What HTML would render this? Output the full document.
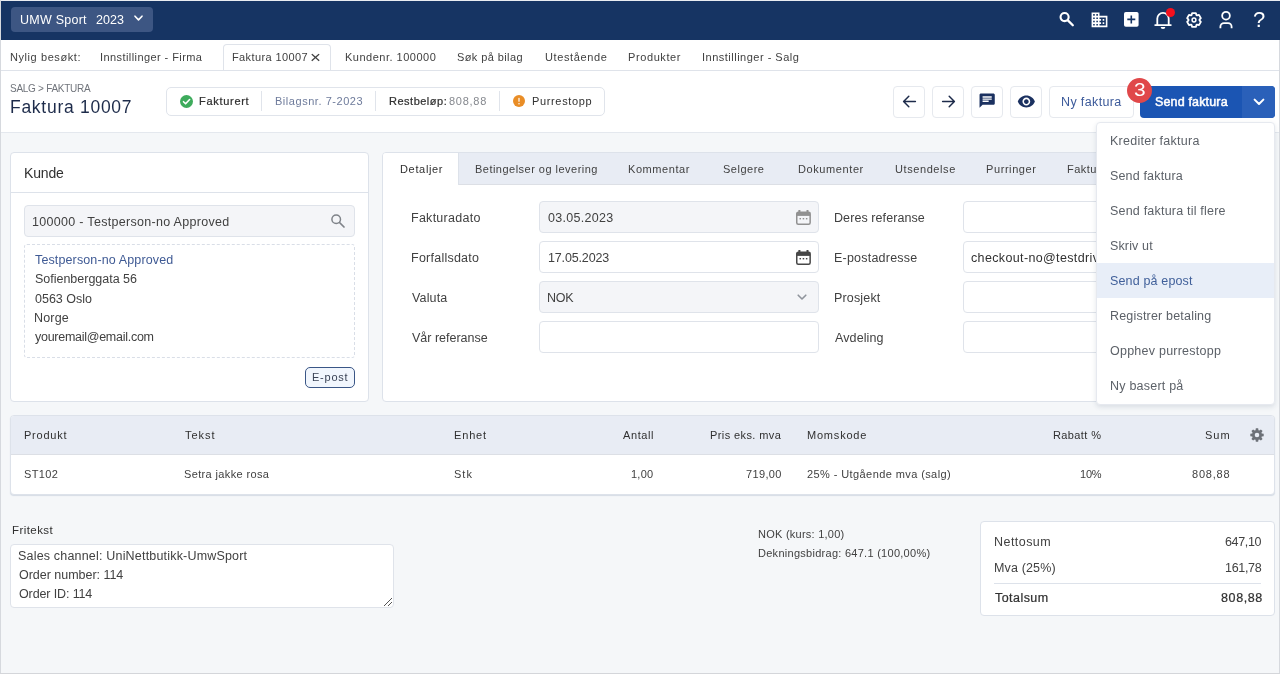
<!DOCTYPE html>
<html lang="no">
<head>
<meta charset="utf-8">
<title>Faktura 10007</title>
<style>
*{box-sizing:border-box;margin:0;padding:0}
html,body{width:1280px;height:674px;overflow:hidden}
body{font-family:"Liberation Sans","DejaVu Sans",sans-serif;font-size:13px;color:#3a3a3a;background:#f5f7f9;position:relative}
.abs{position:absolute}
svg{position:absolute;overflow:visible}
.t{position:absolute;white-space:nowrap;line-height:1;will-change:transform}
#nav{left:0;top:0;width:1280px;height:40px;background:#163463}
#company{left:11px;top:7px;width:142px;height:25px;border-radius:4px;background:#3d5683}
#tabs{left:0;top:40px;width:1280px;height:31px;background:#fff;border-bottom:1px solid #dfe3ea}
#acttab{left:223px;top:44px;width:108px;height:26px;background:#fff;border:1px solid #dfe3ea;border-bottom:none;border-radius:4px 4px 0 0}
#toolbar{left:0;top:71px;width:1280px;height:62px;background:#fff;border-bottom:1px solid #e4e8ee}
#pill{left:166px;top:87px;width:439px;height:29px;border:1px solid #e0e4eb;border-radius:5px;background:#fff}
.sep{position:absolute;top:91px;width:1px;height:20px;background:#e0e4eb}
.ibtn{position:absolute;top:86px;height:32px;width:32px;border:1px solid #e6e9ee;border-radius:4px;background:#fff}
.card{position:absolute;background:#fff;border:1px solid #dde2ea;border-radius:4px}
.inp{position:absolute;height:32px;border:1px solid #dfe3ea;border-radius:4px;background:#fff}
.inp.dis{background:#f4f5f8}
#menu{left:1096px;top:122px;width:179px;height:283px;background:#fff;border:1px solid #e6e9ef;border-radius:4px;box-shadow:0 2px 5px rgba(40,60,90,.13);z-index:30}
</style>
</head>
<body>
<div class="abs" id="nav"></div>
<div class="abs" id="company"></div>
<svg style="left:134px;top:15px" width="9" height="7" viewBox="0 0 9 7"><path d="M1 1.2 L4.5 4.9 L8 1.2" fill="none" stroke="#fff" stroke-width="1.6" stroke-linecap="round" stroke-linejoin="round"/></svg>

<!-- navbar icons -->
<svg style="left:1058px;top:10px" width="18" height="18" viewBox="0 0 18 18"><circle cx="6.6" cy="7.1" r="4.05" fill="none" stroke="#fff" stroke-width="2.1"/><path d="M9.9 10.4 L14.8 15.3" stroke="#fff" stroke-width="2.3" stroke-linecap="round"/></svg>
<svg style="left:1089.6px;top:9.7px" width="19" height="19.7" viewBox="0 0 24 24" preserveAspectRatio="none"><path fill="#fff" d="M12 7V3H2v18h20V7H12zM6 19H4v-2h2v2zm0-4H4v-2h2v2zm0-4H4V9h2v2zm0-4H4V5h2v2zm4 12H8v-2h2v2zm0-4H8v-2h2v2zm0-4H8V9h2v2zm0-4H8V5h2v2zm10 12h-8v-2h2v-2h-2v-2h2v-2h-2V9h8v10zm-2-8h-2v2h2v-2zm0 4h-2v2h2v-2z"/></svg>
<svg style="left:1123.6px;top:12.2px" width="14.6" height="14.8" viewBox="0 0 14.6 14.8"><rect x="0" y="0" width="14.6" height="14.8" rx="1.8" fill="#fff"/><path d="M3.3 7.4 H11.3 M7.3 3.4 V11.4" stroke="#163463" stroke-width="1.6"/></svg>
<svg style="left:1152.6px;top:9px" width="20" height="21" viewBox="0 0 20 21"><path d="M4.3 16 V9.6 A5.7 5.7 0 0 1 15.7 9.6 V16" fill="none" stroke="#fff" stroke-width="1.8"/><path d="M2.2 16.1 H17.8" stroke="#fff" stroke-width="1.9" stroke-linecap="round"/><path d="M7.7 18 H12.3 A2.3 2.1 0 0 1 7.7 18Z" fill="#fff"/></svg>
<div class="abs" style="left:1165.6px;top:7.6px;width:9px;height:9px;border-radius:50%;background:#f5101d"></div>
<svg style="left:1184.45px;top:9.6px" width="20" height="20" viewBox="0 0 20 20"><path d="M12.50 5.10 L11.84 3.14 L8.16 3.14 L7.50 5.10 L7.00 5.39 L4.98 4.98 L3.14 8.16 L4.51 9.71 L4.51 10.29 L3.14 11.84 L4.98 15.02 L7.00 14.61 L7.50 14.90 L8.16 16.86 L11.84 16.86 L12.50 14.90 L13.00 14.61 L15.02 15.02 L16.86 11.84 L15.49 10.29 L15.49 9.71 L16.86 8.16 L15.02 4.98 L13.00 5.39Z" fill="none" stroke="#fff" stroke-width="1.8" stroke-linejoin="round"/><circle cx="10" cy="10" r="1.9" fill="none" stroke="#fff" stroke-width="1.5"/></svg>
<svg style="left:1216.4px;top:9px" width="20" height="21" viewBox="0 0 20 21"><circle cx="10" cy="6.7" r="3.85" fill="none" stroke="#fff" stroke-width="1.8"/><path d="M4.4 19.2 V17.8 A3.6 3.6 0 0 1 8 14.2 H12 A3.6 3.6 0 0 1 15.6 17.800 V19.2" fill="none" stroke="#fff" stroke-width="1.8"/></svg>
<span class="t" style="left:1252.6px;top:8.9px;font-size:22px;color:#fff">?</span>

<div class="abs" id="tabs"></div>
<div class="abs" id="acttab"></div>
<div class="abs" id="toolbar"></div>
<div class="abs" id="pill"></div>
<div class="sep" style="left:261px"></div>
<div class="sep" style="left:375px"></div>
<div class="sep" style="left:499px"></div>
<svg style="left:180px;top:95px" width="13" height="13" viewBox="0 0 13 13"><circle cx="6.500" cy="6.5" r="6.5" fill="#3eab5c"/><path d="M3.500 6.700 L5.600 8.800 L9.600 4.500" fill="none" stroke="#fff" stroke-width="1.6" stroke-linecap="round" stroke-linejoin="round"/></svg>
<svg style="left:513px;top:95.400px" width="12" height="12" viewBox="0 0 12 12"><circle cx="6" cy="6" r="6" fill="#e98d26"/><rect x="5.350" y="2.800" width="1.3" height="4" rx=".6" fill="#fff" fill-opacity=".92"/><circle cx="6" cy="8.800" r=".8" fill="#fff" fill-opacity=".92"/></svg>

<div class="ibtn" style="left:893px"></div>
<div class="ibtn" style="left:932px"></div>
<div class="ibtn" style="left:971px"></div>
<div class="ibtn" style="left:1010px"></div>
<svg style="left:902px;top:94px" width="15" height="15" viewBox="0 0 15 15"><path d="M13.400 7.500 H1.800 M6.800 2.300 L1.600 7.500 L6.800 12.700" fill="none" stroke="#1d2b4a" stroke-width="1.5" stroke-linecap="round" stroke-linejoin="round"/></svg>
<svg style="left:940.500px;top:94px" width="15" height="15" viewBox="0 0 15 15"><path d="M1.600 7.500 H13.200 M8.200 2.300 L13.400 7.500 L8.200 12.700" fill="none" stroke="#1d2b4a" stroke-width="1.5" stroke-linecap="round" stroke-linejoin="round"/></svg>
<svg style="left:978.400px;top:92.400px" width="18.300" height="17.100" viewBox="0 0 24 24" preserveAspectRatio="none"><path fill="#1b3160" d="M20 2H4c-1.100 0-1.990.9-1.990 2L2 22l4-4h14c1.100 0 2-.9 2-2V4c0-1.100-.9-2-2-2zM6 9h12v2H6V9zm8 5H6v-2h8v2zm4-6H6V6h12v2z"/></svg>
<svg style="left:1016.600px;top:91.700px" width="18.700" height="19" viewBox="0 0 24 24" preserveAspectRatio="none"><path fill="#1b3160" d="M12 4.500C7 4.500 2.730 7.610 1 12c1.730 4.390 6 7.500 11 7.500s9.270-3.110 11-7.500c-1.730-4.390-6-7.500-11-7.500zM12 17c-2.760 0-5-2.240-5-5s2.240-5 5-5 5 2.240 5 5-2.240 5-5 5zm0-8c-1.660 0-3 1.340-3 3s1.340 3 3 3 3-1.340 3-3-1.340-3-3-3z"/></svg>
<div class="ibtn" style="left:1049px;width:85px"></div>
<div class="abs" style="left:1140px;top:86px;width:135px;height:32px;border-radius:4px;background:#1b55b3"></div>
<div class="abs" style="left:1242px;top:86px;width:33px;height:32px;border-radius:0 4px 4px 0;background:#2a60b9"></div>
<svg style="left:1253px;top:98px" width="12" height="8" viewBox="0 0 12 8"><path d="M1.600 1.600 L6 6 L10.400 1.600" fill="none" stroke="#fff" stroke-width="2" stroke-linecap="round" stroke-linejoin="round"/></svg>
<div class="abs" style="left:1127px;top:77.5px;width:25px;height:25px;border-radius:50%;background:#e0484a"></div>

<!-- Kunde card -->
<div class="card" style="left:10px;top:152px;width:359px;height:250px"></div>
<div class="abs" style="left:11px;top:192px;width:357px;height:1px;background:#dde2ea"></div>
<div class="inp dis" style="left:24px;top:205px;width:331px"></div>
<svg style="left:330px;top:213px" width="16" height="16" viewBox="0 0 16 16"><circle cx="6.200" cy="6.200" r="4.300" fill="none" stroke="#7f8389" stroke-width="1.500"/><path d="M9.500 9.500 L14 14" stroke="#7f8389" stroke-width="1.700" stroke-linecap="round"/></svg>
<div class="abs" style="left:24px;top:244px;width:331px;height:114px;border:1px dashed #d9dee7;border-radius:3px"></div>
<div class="abs" style="left:305px;top:367px;width:50px;height:21px;border:1px solid #3a5686;border-radius:5px;background:#f1f6fd"></div>

<!-- Details card -->
<div class="card" style="left:382px;top:152px;width:893px;height:250px"></div>
<div class="abs" style="left:383px;top:153px;width:891px;height:32px;background:#e8ecf4;border-bottom:1px solid #dcdfe5;border-radius:3px 3px 0 0"></div>
<div class="abs" style="left:383px;top:153px;width:76px;height:32px;background:#fff;border-right:1px solid #dde2ea;border-radius:3px 0 0 0"></div>
<div class="inp dis" style="left:539px;top:201px;width:280px"></div>
<div class="inp" style="left:539px;top:241px;width:280px"></div>
<div class="inp dis" style="left:539px;top:281px;width:280px"></div>
<div class="inp" style="left:539px;top:321px;width:280px"></div>
<div class="inp" style="left:963px;top:201px;width:280px"></div>
<div class="inp" style="left:963px;top:241px;width:280px"></div>
<div class="inp" style="left:963px;top:281px;width:280px"></div>
<div class="inp" style="left:963px;top:321px;width:280px"></div>
<svg style="left:796px;top:210px" width="15" height="15" viewBox="0 0 15 15"><rect x=".75" y="2.300" width="13.400" height="11.900" rx="1.500" fill="none" stroke="#919191" stroke-width="1.500"/><rect x=".75" y="2.300" width="13.400" height="3.600" fill="#919191"/><rect x="2.400" y="0" width="2" height="3" fill="#919191"/><rect x="10.500" y="0" width="2" height="3" fill="#919191"/><rect x="3.500" y="8" width="1.500" height="1.400" fill="#919191"/><rect x="6.700" y="8" width="1.500" height="1.400" fill="#919191"/><rect x="9.900" y="8" width="1.500" height="1.400" fill="#919191"/></svg>
<svg style="left:796px;top:250px" width="15" height="15" viewBox="0 0 15 15"><rect x=".75" y="2.300" width="13.400" height="11.900" rx="1.500" fill="none" stroke="#474747" stroke-width="1.500"/><rect x=".75" y="2.300" width="13.400" height="3.600" fill="#474747"/><rect x="2.400" y="0" width="2" height="3" fill="#474747"/><rect x="10.500" y="0" width="2" height="3" fill="#474747"/><rect x="3.500" y="8" width="1.500" height="1.400" fill="#474747"/><rect x="6.700" y="8" width="1.500" height="1.400" fill="#474747"/><rect x="9.900" y="8" width="1.500" height="1.400" fill="#474747"/></svg>
<svg style="left:797px;top:293.500px" width="10" height="7" viewBox="0 0 10 7"><path d="M1.200 1.200 L5 5 L8.800 1.200" fill="none" stroke="#8f949c" stroke-width="1.600" stroke-linecap="round" stroke-linejoin="round"/></svg>

<!-- Table -->
<div class="card" style="left:10px;top:415px;width:1265px;height:80px;box-shadow:0 1px 1px rgba(120,140,170,.25)"></div>
<div class="abs" style="left:11px;top:416px;width:1263px;height:39px;background:#e8ecf4;border-bottom:1px solid #dcdfe5;border-radius:3px 3px 0 0"></div>
<svg style="left:1249px;top:427.200px" width="16" height="16" viewBox="0 0 16 16"><path fill="#6d7178" fill-rule="evenodd" d="M9.46 3.22 L9.18 1.30 L6.82 1.30 L6.54 3.22 L5.65 3.59 L4.10 2.43 L2.43 4.10 L3.59 5.65 L3.22 6.54 L1.30 6.82 L1.30 9.18 L3.22 9.46 L3.59 10.35 L2.43 11.90 L4.10 13.57 L5.65 12.41 L6.54 12.78 L6.82 14.70 L9.18 14.70 L9.46 12.78 L10.35 12.41 L11.90 13.57 L13.57 11.90 L12.41 10.35 L12.78 9.46 L14.70 9.18 L14.70 6.82 L12.78 6.54 L12.41 5.65 L13.57 4.10 L11.90 2.43 L10.35 3.59Z M10.300 8 A2.300 2.300 0 1 0 5.700 8 A2.300 2.300 0 1 0 10.300 8Z"/></svg>

<!-- Fritekst -->
<div class="abs" style="left:10px;top:544px;width:384px;height:64px;border:1px solid #dfe3ea;border-radius:4px;background:#fff"></div>
<svg style="left:383px;top:597px" width="10" height="10" viewBox="0 0 10 10"><path d="M1 9 L9 1 M5 9 L9 5" stroke="#555" stroke-width="1" fill="none"/></svg>

<!-- Summary -->
<div class="card" style="left:980px;top:521px;width:295px;height:95px"></div>
<div class="abs" style="left:994px;top:583px;width:267px;height:1px;background:#dde2ea"></div>

<!-- Dropdown menu -->
<div class="abs" id="menu"><div class="abs" style="left:0;top:140px;width:177px;height:35px;background:#e8eef8"></div></div>

<span class="t" style="left:20.00px;top:14px;font-size:12.5px;color:#fff;letter-spacing:0.245px;">UMW Sport</span>
<span class="t" style="left:95.86px;top:14px;font-size:12.5px;color:#fff;letter-spacing:0.014px;">2023</span>
<span class="t" style="left:10.09px;top:52px;font-size:11px;color:#414141;letter-spacing:0.572px;">Nylig besøkt:</span>
<span class="t" style="left:99.98px;top:52px;font-size:11px;color:#414141;letter-spacing:0.420px;">Innstillinger - Firma</span>
<span class="t" style="left:232.09px;top:52px;font-size:11px;color:#414141;letter-spacing:0.385px;">Faktura 10007</span>
<span class="t" style="left:310.49px;top:49px;font-size:17px;color:#414141;transform:scaleX(1.099);transform-origin:0 50%;">×</span>
<span class="t" style="left:344.59px;top:52px;font-size:11px;color:#414141;letter-spacing:0.502px;">Kundenr. 100000</span>
<span class="t" style="left:457.17px;top:52px;font-size:11px;color:#414141;letter-spacing:0.405px;">Søk på bilag</span>
<span class="t" style="left:544.66px;top:52px;font-size:11px;color:#414141;letter-spacing:0.615px;">Utestående</span>
<span class="t" style="left:628.34px;top:52px;font-size:11px;color:#414141;letter-spacing:0.599px;">Produkter</span>
<span class="t" style="left:702.48px;top:52px;font-size:11px;color:#414141;letter-spacing:0.495px;">Innstillinger - Salg</span>
<span class="t" style="left:10.44px;top:84px;font-size:10px;color:#70747b;letter-spacing:-0.271px;">SALG &gt; FAKTURA</span>
<span class="t" style="left:10.35px;top:99px;font-size:17.5px;color:#1d2b4a;letter-spacing:0.726px;">Faktura 10007</span>
<span class="t" style="left:199.03px;top:96px;font-size:11px;color:#303030;letter-spacing:0.707px;-webkit-text-stroke:0.22px #303030;">Fakturert</span>
<span class="t" style="left:274.59px;top:96px;font-size:11px;color:#6e7b9b;letter-spacing:0.538px;">Bilagsnr. 7-2023</span>
<span class="t" style="left:388.53px;top:96px;font-size:11px;color:#303030;letter-spacing:0.502px;-webkit-text-stroke:0.22px #303030;">Restbeløp:</span>
<span class="t" style="left:449.22px;top:96px;font-size:11px;color:#85888e;letter-spacing:0.735px;">808,88</span>
<span class="t" style="left:532.09px;top:96px;font-size:11px;color:#303030;letter-spacing:0.646px;">Purrestopp</span>
<span class="t" style="left:1061.46px;top:96px;font-size:12.5px;color:#3c5a9a;letter-spacing:0.372px;">Ny faktura</span>
<span class="t" style="left:1155.33px;top:96px;font-size:12.5px;color:#fff;letter-spacing:0.156px;-webkit-text-stroke:0.5px #fff;">Send faktura</span>
<span class="t" style="left:1133.67px;top:81px;font-size:18.5px;color:#fff;transform:scaleX(1.130);transform-origin:0 50%;">3</span>
<span class="t" style="left:23.82px;top:166px;font-size:14px;color:#303030;letter-spacing:-0.171px;">Kunde</span>
<span class="t" style="left:32.00px;top:216px;font-size:12.5px;color:#414141;letter-spacing:0.305px;">100000 - Testperson-no Approved</span>
<span class="t" style="left:35.20px;top:254px;font-size:12.5px;color:#3f5a94;letter-spacing:0.128px;">Testperson-no Approved</span>
<span class="t" style="left:34.63px;top:273px;font-size:12.5px;color:#414141;letter-spacing:-0.012px;">Sofienberggata 56</span>
<span class="t" style="left:34.98px;top:293px;font-size:12.5px;color:#414141;letter-spacing:-0.014px;">0563 Oslo</span>
<span class="t" style="left:34.46px;top:312px;font-size:12.5px;color:#414141;letter-spacing:0.174px;">Norge</span>
<span class="t" style="left:35.26px;top:331px;font-size:12.5px;color:#414141;letter-spacing:-0.270px;">youremail@email.com</span>
<span class="t" style="left:312.39px;top:372px;font-size:11px;color:#3a4356;letter-spacing:0.755px;">E-post</span>
<span class="t" style="left:399.59px;top:164px;font-size:11px;color:#303030;letter-spacing:0.660px;">Detaljer</span>
<span class="t" style="left:475.09px;top:164px;font-size:11px;color:#414141;letter-spacing:0.478px;">Betingelser og levering</span>
<span class="t" style="left:628.34px;top:164px;font-size:11px;color:#414141;letter-spacing:0.578px;">Kommentar</span>
<span class="t" style="left:723.17px;top:164px;font-size:11px;color:#414141;letter-spacing:0.500px;">Selgere</span>
<span class="t" style="left:798.09px;top:164px;font-size:11px;color:#414141;letter-spacing:0.597px;">Dokumenter</span>
<span class="t" style="left:894.66px;top:164px;font-size:11px;color:#414141;letter-spacing:0.586px;">Utsendelse</span>
<span class="t" style="left:986.09px;top:164px;font-size:11px;color:#414141;letter-spacing:0.586px;">Purringer</span>
<span class="t" style="left:1067.39px;top:164px;font-size:11px;color:#414141;letter-spacing:0.491px;">Faktu</span>
<span class="t" style="left:411.21px;top:212px;font-size:12.5px;color:#414141;letter-spacing:0.265px;">Fakturadato</span>
<span class="t" style="left:411.21px;top:252px;font-size:12.5px;color:#414141;letter-spacing:0.242px;">Forfallsdato</span>
<span class="t" style="left:411.98px;top:292px;font-size:12.5px;color:#414141;letter-spacing:0.148px;">Valuta</span>
<span class="t" style="left:411.98px;top:332px;font-size:12.5px;color:#414141;letter-spacing:-0.006px;">Vår referanse</span>
<span class="t" style="left:547.98px;top:212px;font-size:12.5px;color:#414141;letter-spacing:0.299px;">03.05.2023</span>
<span class="t" style="left:548.00px;top:252px;font-size:12.5px;color:#414141;letter-spacing:-0.148px;">17.05.2023</span>
<span class="t" style="left:547.46px;top:292px;font-size:12.5px;color:#414141;letter-spacing:-0.243px;">NOK</span>
<span class="t" style="left:834.26px;top:212px;font-size:12.5px;color:#414141;letter-spacing:0.082px;">Deres referanse</span>
<span class="t" style="left:834.26px;top:252px;font-size:12.5px;color:#414141;letter-spacing:0.220px;">E-postadresse</span>
<span class="t" style="left:834.26px;top:292px;font-size:12.5px;color:#414141;letter-spacing:0.164px;">Prosjekt</span>
<span class="t" style="left:835.05px;top:332px;font-size:12.5px;color:#414141;letter-spacing:0.115px;">Avdeling</span>
<span class="t" style="left:970.93px;top:252px;font-size:12.5px;color:#303030;letter-spacing:0.359px;">checkout-no@testdriv</span>
<span class="t" style="left:23.84px;top:430px;font-size:11px;color:#303030;letter-spacing:0.771px;">Produkt</span>
<span class="t" style="left:184.55px;top:430px;font-size:11px;color:#303030;letter-spacing:0.962px;">Tekst</span>
<span class="t" style="left:453.59px;top:430px;font-size:11px;color:#303030;letter-spacing:0.844px;">Enhet</span>
<span class="t" style="left:623.27px;top:430px;font-size:11px;color:#303030;letter-spacing:0.610px;">Antall</span>
<span class="t" style="left:710.34px;top:430px;font-size:11px;color:#303030;letter-spacing:0.406px;">Pris eks. mva</span>
<span class="t" style="left:806.59px;top:430px;font-size:11px;color:#303030;letter-spacing:0.797px;">Momskode</span>
<span class="t" style="left:1053.34px;top:430px;font-size:11px;color:#303030;letter-spacing:0.384px;">Rabatt %</span>
<span class="t" style="left:1204.67px;top:430px;font-size:11px;color:#303030;letter-spacing:1.000px;">Sum</span>
<span class="t" style="left:23.92px;top:469px;font-size:11px;color:#414141;letter-spacing:0.362px;">ST102</span>
<span class="t" style="left:184.17px;top:469px;font-size:11px;color:#414141;letter-spacing:0.358px;">Setra jakke rosa</span>
<span class="t" style="left:453.67px;top:469px;font-size:11px;color:#414141;letter-spacing:1.000px;">Stk</span>
<span class="t" style="left:631.37px;top:469px;font-size:11px;color:#414141;letter-spacing:0.255px;">1,00</span>
<span class="t" style="left:746.08px;top:469px;font-size:11px;color:#414141;letter-spacing:0.357px;">719,00</span>
<span class="t" style="left:806.93px;top:469px;font-size:11px;color:#414141;letter-spacing:0.408px;">25% - Utgående mva (salg)</span>
<span class="t" style="left:1079.62px;top:469px;font-size:11px;color:#414141;letter-spacing:-0.207px;">10%</span>
<span class="t" style="left:1191.87px;top:469px;font-size:11px;color:#414141;letter-spacing:0.785px;">808,88</span>
<span class="t" style="left:12.00px;top:525px;font-size:11.5px;color:#303030;letter-spacing:0.436px;">Fritekst</span>
<span class="t" style="left:18.33px;top:550px;font-size:12.5px;color:#414141;letter-spacing:0.188px;">Sales channel: UniNettbutikk-UmwSport</span>
<span class="t" style="left:18.56px;top:569px;font-size:12.5px;color:#414141;letter-spacing:-0.024px;">Order number: 114</span>
<span class="t" style="left:18.56px;top:588px;font-size:12.5px;color:#414141;letter-spacing:-0.124px;">Order ID: 114</span>
<span class="t" style="left:757.59px;top:529px;font-size:11px;color:#414141;letter-spacing:0.249px;">NOK (kurs: 1,00)</span>
<span class="t" style="left:757.59px;top:548px;font-size:11px;color:#414141;letter-spacing:0.274px;">Dekningsbidrag: 647.1 (100,00%)</span>
<span class="t" style="left:993.96px;top:536px;font-size:12.5px;color:#414141;letter-spacing:0.458px;">Nettosum</span>
<span class="t" style="left:1225.32px;top:536px;font-size:12.5px;color:#414141;letter-spacing:-0.348px;">647,10</span>
<span class="t" style="left:993.96px;top:562px;font-size:12.5px;color:#414141;letter-spacing:0.151px;">Mva (25%)</span>
<span class="t" style="left:1225.25px;top:562px;font-size:12.5px;color:#414141;letter-spacing:-0.318px;">161,78</span>
<span class="t" style="left:994.81px;top:592px;font-size:12.5px;color:#303030;letter-spacing:0.452px;-webkit-text-stroke:0.22px #303030;">Totalsum</span>
<span class="t" style="left:1220.52px;top:592px;font-size:12.5px;color:#303030;letter-spacing:0.611px;-webkit-text-stroke:0.22px #303030;">808,88</span>
<span class="t" style="left:1109.86px;top:135px;font-size:12.5px;color:#5c6168;letter-spacing:0.264px;z-index:31;">Krediter faktura</span>
<span class="t" style="left:1110.03px;top:170px;font-size:12.5px;color:#5c6168;letter-spacing:0.161px;z-index:31;">Send faktura</span>
<span class="t" style="left:1110.03px;top:205px;font-size:12.5px;color:#5c6168;letter-spacing:0.204px;z-index:31;">Send faktura til flere</span>
<span class="t" style="left:1110.03px;top:240px;font-size:12.5px;color:#5c6168;letter-spacing:0.138px;z-index:31;">Skriv ut</span>
<span class="t" style="left:1110.03px;top:275px;font-size:12.5px;color:#41609a;letter-spacing:0.156px;z-index:31;">Send på epost</span>
<span class="t" style="left:1109.86px;top:310px;font-size:12.5px;color:#5c6168;letter-spacing:0.190px;z-index:31;">Registrer betaling</span>
<span class="t" style="left:1110.26px;top:345px;font-size:12.5px;color:#5c6168;letter-spacing:0.240px;z-index:31;">Opphev purrestopp</span>
<span class="t" style="left:1109.86px;top:380px;font-size:12.5px;color:#5c6168;letter-spacing:0.223px;z-index:31;">Ny basert på</span>

<div class="abs" style="left:0;top:0;width:1280px;height:1px;background:#e9ecf1;z-index:50"></div>
<div class="abs" style="left:0;top:0;width:1px;height:674px;background:#d6d9de;z-index:50"></div>
<div class="abs" style="left:1279px;top:40px;width:1px;height:634px;background:#d6d9de;z-index:50"></div>
<div class="abs" style="left:0;top:673px;width:1280px;height:1px;background:#d4d6da;z-index:50"></div>
</body>
</html>
